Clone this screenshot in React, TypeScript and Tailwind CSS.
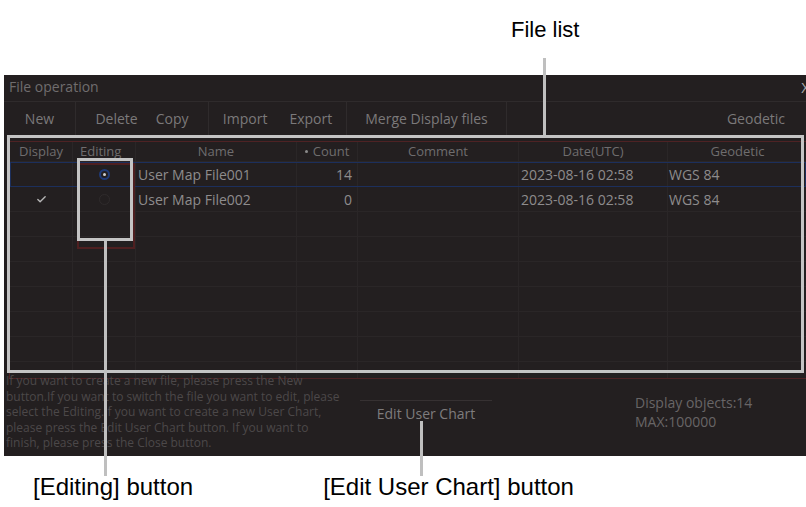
import { Check } from 'lucide-react';

const gridCols = 'grid grid-cols-[63px_63px_161px_61px_161px_149px_139px]';

const rows = [
	{ display: false, editing: true, name: 'User Map File001', count: '14', date: '2023-08-16 02:58', geo: 'WGS 84' },
	{ display: true, editing: false, name: 'User Map File002', count: '0', date: '2023-08-16 02:58', geo: 'WGS 84' },
];

const helpLines = [
	'If you want to create a new file, please press the New',
	'button.If you want to switch the file you want to edit, please',
	'select the Editing.If you want to create a new User Chart,',
	'please press the Edit User Chart button. If you want to',
	'finish, please press the Close button.',
];

function Radio({ on }: { on: boolean }) {
	if (on) {
		return (
			<span className="flex size-[11px] items-center justify-center rounded-full border-2 border-[#1f3a78]">
				<span className="size-[3px] rounded-full bg-[#d0d0d0]" />
			</span>
		);
	}
	return <span className="size-[11px] rounded-full border border-[#2f2b2c]" />;
}

function Toolbar() {
	const btn = 'flex h-full items-center justify-center border-r border-[#2f2b2c]';
	return (
		<div className="flex h-[34px] border-t border-[#2f2b2c] text-[14px] text-[#7b797a]">
			<div className={`${btn} w-[72px]`}>New</div>
			<div className={`${btn} w-[133px] gap-[18px]`}>
				<span>Delete</span>
				<span>Copy</span>
			</div>
			<div className={`${btn} w-[138px] gap-[22px]`}>
				<span>Import</span>
				<span>Export</span>
			</div>
			<div className={`${btn} w-[160px]`}>Merge Display files</div>
			<div className="flex-1" />
			<div className="flex h-full w-[100px] items-center justify-center">Geodetic</div>
		</div>
	);
}

function FileTable() {
	const cell = 'flex h-full items-center border-r border-[#2a2627]';
	const empty = Array.from({ length: 7 });
	return (
		<div className="ml-[5px] mt-[6px] h-[238px] w-[797px] overflow-hidden border border-r-0 border-[#4e2224]">
			<div className={`${gridCols} h-[20px] border-b border-[#2a2627] text-[13px] text-[#6f6d6e]`}>
				<div className={`${cell} justify-center`}>Display</div>
				<div className={`${cell} justify-start pl-[7px]`}>Editing</div>
				<div className={`${cell} justify-center`}>Name</div>
				<div className={`${cell} justify-center gap-[5px]`}>
					<span className="size-[3px] rounded-full bg-[#8a8a8a]" />
					<span>Count</span>
				</div>
				<div className={`${cell} justify-center`}>Comment</div>
				<div className={`${cell} justify-center`}>Date(UTC)</div>
				<div className="flex h-full items-center justify-center">Geodetic</div>
			</div>
			{rows.map((r, i) => (
				<div
					key={r.name}
					className={`${gridCols} h-[25px] text-[14px] text-[#8e8c8d] ${i === 0 ? 'border-y border-[#1c2f5c] outline outline-1 -outline-offset-1 outline-[#1c2f5c]' : 'border-b border-[#2a2627]'}`}
				>
					<div className={`${cell} justify-center`}>
						{r.display && <Check size={11} strokeWidth={3} className="text-[#b5b5b5]" />}
					</div>
					<div className={`${cell} justify-center`}>
						<Radio on={r.editing} />
					</div>
					<div className={`${cell} pl-[2px]`}>{r.name}</div>
					<div className={`${cell} justify-end pr-[5px]`}>{r.count}</div>
					<div className={cell} />
					<div className={`${cell} pl-[2px]`}>{r.date}</div>
					<div className="flex h-full items-center pl-[1px]">{r.geo}</div>
				</div>
			))}
			{empty.map((_, i) => (
				<div key={i} className={`${gridCols} h-[25px] border-b border-[#2a2627]`}>
					<div className={cell} />
					<div className={cell} />
					<div className={cell} />
					<div className={cell} />
					<div className={cell} />
					<div className={cell} />
					<div />
				</div>
			))}
		</div>
	);
}

export default function App() {
	return (
		<div className="relative h-[507px] w-[806px] overflow-hidden bg-white font-['Open_Sans',sans-serif]">
			{/* top annotation */}
			<div className="h-[75px] pl-[511px] pt-[17px] font-['Liberation_Sans',sans-serif] text-[22px] leading-[26px] text-black">
				File list
			</div>

			{/* dialog */}
			<div className="ml-[4px] flex h-[381px] w-[802px] flex-col bg-[#231f20]">
				<div className="flex h-[26px] items-start justify-between pl-[5px] pt-[1px] text-[14px] text-[#706d6e]">
					<span>File operation</span>
					<span className="-mr-[4px] text-[15px] text-[#a8a8a8]">X</span>
				</div>
				<Toolbar />
				<FileTable />
				<div className="-mt-[6px] flex">
					<div className="w-[356px] whitespace-nowrap pl-[2px] text-[12px] leading-[15.5px] text-[#4c4849]">
						{helpLines.map((l) => (
							<div key={l}>{l}</div>
						))}
					</div>
					<div className="mt-[27px] flex h-[26px] w-[132px] items-center justify-center border-t border-[#363132] text-[14px] text-[#7e7c7d]">
						Edit User Chart
					</div>
					<div className="ml-[143px] mt-[20px] text-[14px] leading-[19px] text-[#686566]">
						<div>Display objects:14</div>
						<div>MAX:100000</div>
					</div>
				</div>
			</div>

			{/* bottom annotation labels */}
			<div className="flex h-[51px] items-center pt-[10px] font-['Liberation_Sans',sans-serif] text-[24px] leading-[28px] text-black">
				<span className="pl-[33px]">[Editing] button</span>
				<span className="pl-[130px]">[Edit User Chart] button</span>
			</div>

			{/* callout overlays */}
			<div className="absolute left-[543px] top-[58px] h-[77px] w-[3px] bg-[#bfbfbf]" />
			<div className="absolute left-[7px] top-[135px] h-[238px] w-[797px] border-[3px] border-[#c4c4c4]" />
			<div className="absolute left-[77px] top-[163px] h-[86px] w-[58px] border-2 border-[#4e1f20]" />
			<div className="absolute left-[77px] top-[158px] h-[83px] w-[56px] border-[3px] border-[#c4c4c4]" />
			<div className="absolute left-[104px] top-[241px] h-[235px] w-[3px] bg-[#bfbfbf]" />
			<div className="absolute left-[420px] top-[421px] h-[55px] w-[3px] bg-[#bfbfbf]" />
		</div>
	);
}
